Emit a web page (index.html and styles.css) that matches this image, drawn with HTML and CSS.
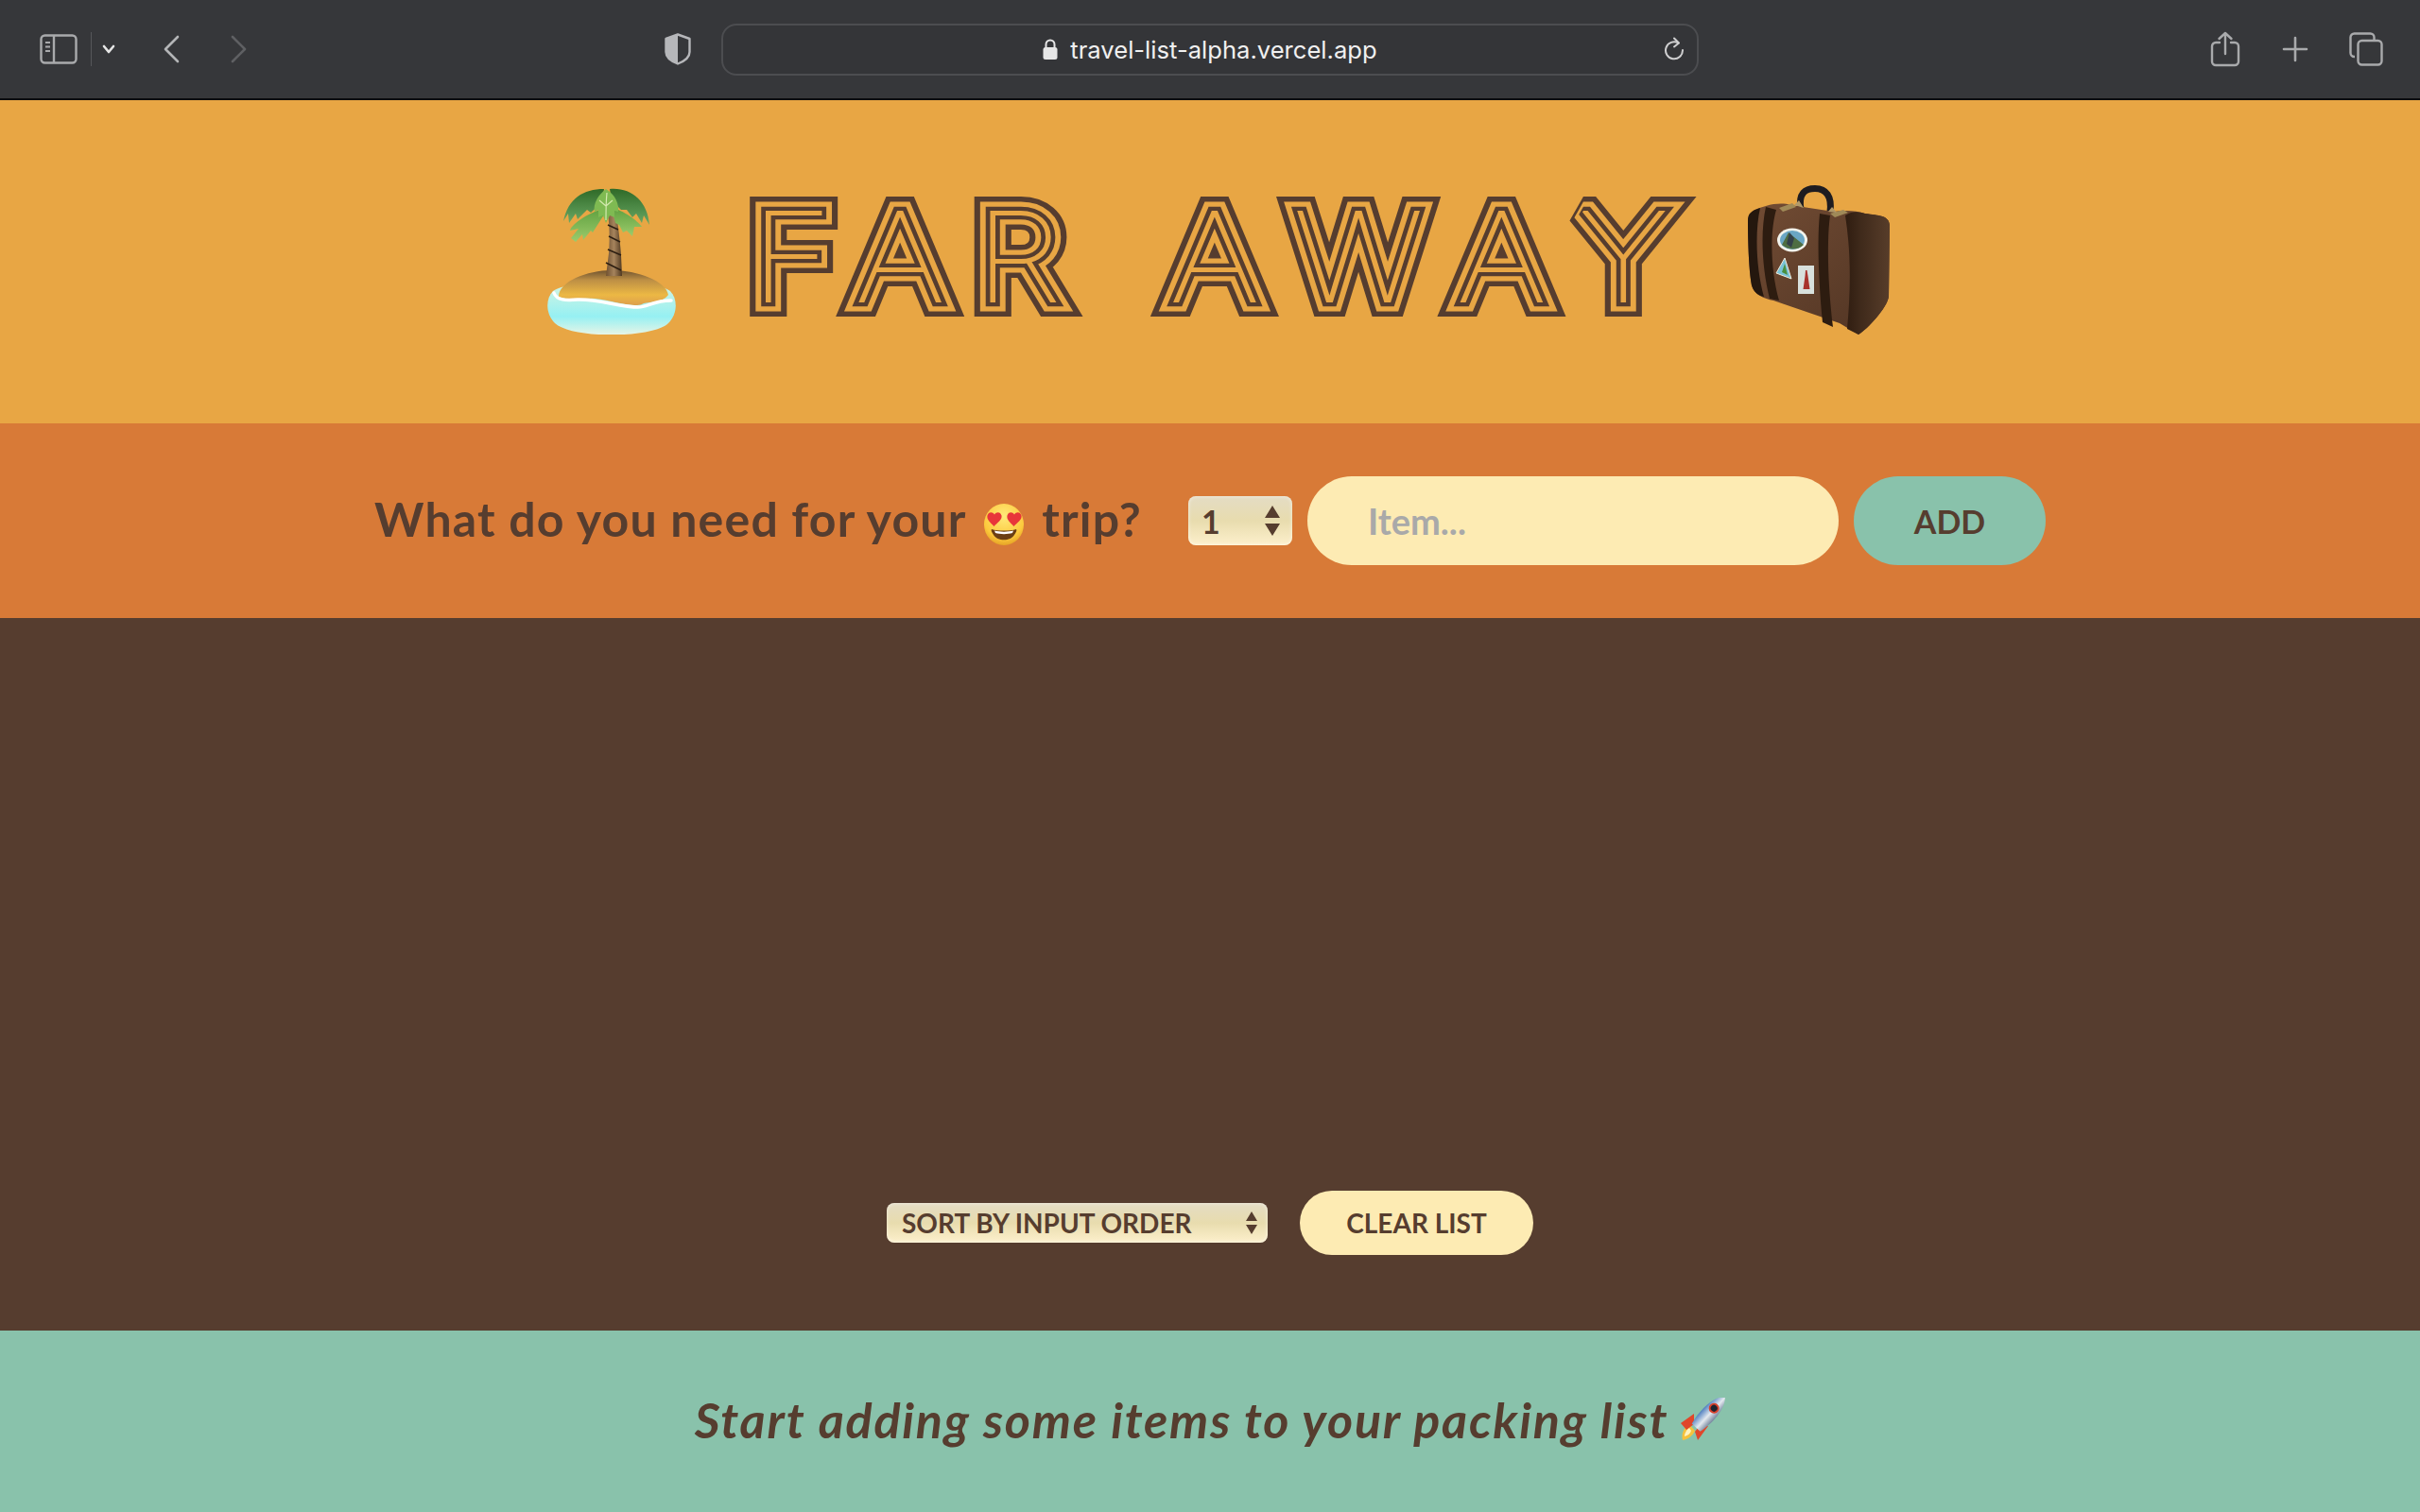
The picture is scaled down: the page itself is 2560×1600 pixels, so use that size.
FILE: index.html
```html
<!DOCTYPE html>
<html lang="en">
<head>
  <meta charset="UTF-8">
  <title>Far Away</title>
  <link rel="stylesheet" href="styles.css">
</head>
<body>
  <div class="toolbar">
    <svg class="tb-sidebar" width="40" height="32" viewBox="0 0 40 32" fill="none" stroke="#a9aaac" stroke-width="2.4">
      <rect x="1.5" y="1.5" width="37" height="29" rx="4"/>
      <path d="M15 1.5v29"/>
      <path d="M6 9h5M6 13.5h5M6 18h5" stroke-width="2"/>
    </svg>
    <span class="tb-sep"></span>
    <svg class="tb-drop" width="14" height="10" viewBox="0 0 14 10" fill="none" stroke="#e6e6e6" stroke-width="2.6" stroke-linecap="round" stroke-linejoin="round"><path d="M2 2l5 6 5-6"/></svg>
    <svg class="tb-back" width="18" height="30" viewBox="0 0 18 30" fill="none" stroke="#b4b5b7" stroke-width="2.6" stroke-linecap="round" stroke-linejoin="round"><path d="M16 2L3 15l13 13"/></svg>
    <svg class="tb-forward" width="18" height="30" viewBox="0 0 18 30" fill="none" stroke="#5f6063" stroke-width="2.6" stroke-linecap="round" stroke-linejoin="round"><path d="M2 2l13 13L2 28"/></svg>
    <svg class="tb-shield" width="28" height="34" viewBox="0 0 28 34">
      <path d="M14 1.500L26.500 6v14c0 6-6 10-12.500 12.500C7.500 30 1.500 26 1.500 20V6z" fill="none" stroke="#b6b7ba" stroke-width="2.4" stroke-linejoin="round"/>
      <path d="M14 1.500L1.500 6v14C1.500 26 7.500 30 14 32.500z" fill="#b6b7ba"/>
    </svg>
    <div class="urlbar">
      <svg class="url-lock" width="16" height="24" viewBox="0 0 16 24">
        <path d="M3.500 11V7a4.500 4.500 0 0 1 9 0v4" fill="none" stroke="#e6e6e6" stroke-width="2"/>
        <rect x="0.500" y="10" width="15" height="13" rx="2.500" fill="#e6e6e6"/>
      </svg>
      <span class="url-text">travel-list-alpha.vercel.app</span>
      <svg class="url-reload" width="22" height="26" viewBox="0 0 22 26" fill="none" stroke="#cfcfd0" stroke-width="2" stroke-linecap="round" stroke-linejoin="round">
        <path d="M15.500 6.500A9 9 0 1 0 20 14"/>
        <path d="M11 1.500l5 5-5 4"/>
      </svg>
    </div>
    <svg class="tb-share" width="32" height="38" viewBox="0 0 32 38" fill="none" stroke="#a9aaac" stroke-width="2.400" stroke-linecap="round" stroke-linejoin="round">
      <path d="M10 12H6a4 4 0 0 0-4 4v16a4 4 0 0 0 4 4h20a4 4 0 0 0 4-4V16a4 4 0 0 0-4-4h-4"/>
      <path d="M16 24V2M9.500 8L16 2l6.500 6"/>
    </svg>
    <svg class="tb-plus" width="28" height="28" viewBox="0 0 28 28" stroke="#a9aaac" stroke-width="2.600" stroke-linecap="round"><path d="M14 2v24M2 14h24"/></svg>
    <svg class="tb-tabs" width="36" height="36" viewBox="0 0 36 36" fill="none" stroke="#a9aaac" stroke-width="2.400">
      <path d="M6 26H5.500a4 4 0 0 1-4-4V5.500a4 4 0 0 1 4-4h17a4 4 0 0 1 4 4V9"/>
      <rect x="9.500" y="9" width="25" height="25.500" rx="4"/>
    </svg>
  </div>

  <header class="logo">
    <svg class="emoji-island" width="136" height="156" viewBox="0 0 136 156">
      <defs>
        <linearGradient id="water" x1="0" y1="0" x2="0" y2="1">
          <stop offset="0" stop-color="#d6f4e0"/><stop offset="0.65" stop-color="#96f0f3"/><stop offset="1" stop-color="#e8f5e6"/>
        </linearGradient>
        <linearGradient id="sand" x1="0" y1="0" x2="0" y2="1">
          <stop offset="0" stop-color="#6f5330"/><stop offset="0.28" stop-color="#bd8f45"/><stop offset="0.7" stop-color="#ecb844"/><stop offset="1" stop-color="#dd9f4e"/>
        </linearGradient>
        <linearGradient id="trunk" x1="0" y1="0" x2="1" y2="0">
          <stop offset="0" stop-color="#6f5030"/><stop offset="0.5" stop-color="#a5835c"/><stop offset="1" stop-color="#4f3820"/>
        </linearGradient>
        <linearGradient id="frond" x1="0" y1="0" x2="0" y2="1">
          <stop offset="0" stop-color="#5fa03f"/><stop offset="1" stop-color="#9ccb6c"/>
        </linearGradient>
        <linearGradient id="frondDark" x1="0" y1="0" x2="0" y2="1">
          <stop offset="0" stop-color="#2f6a28"/><stop offset="1" stop-color="#6aa864"/>
        </linearGradient>
      </defs>
      <path d="M6 110C20 98 116 98 130 110C138 118 138 134 128 144C112 160 26 161 8 144C-2 134-2 118 6 110Z" fill="url(#water)"/>
      <path d="M12 116C12 100 42 88 68 88C96 88 126 100 128 114C120 124 108 120 100 124C90 128 70 120 50 118C36 117 22 120 12 116Z" fill="url(#sand)"/>
      <path d="M7 112C10 120 20 120 32 119C52 118 78 127 96 127C106 127 112 120 131 120" fill="none" stroke="#fff" stroke-width="3.500" stroke-linecap="round"/>
      <path d="M64 28L73 27C75 42 77 58 78 72L79 94L62 94L65 70C66 55 66 42 64 28Z" fill="url(#trunk)"/>
      <path d="M64 40l11 5M65 52l12 6M64 66l14 6M62 80l16 8" stroke="#2d1f12" stroke-width="1.600" fill="none"/>
      <path d="M60 2C38 2 22 12 17 36L22 28L23 38L30 28L32 34L42 24L46 27L58 16Z" fill="url(#frondDark)"/>
      <path d="M66 2C88 0 106 14 108 40L102 30L100 38L94 28L90 32L84 24L78 24L68 14Z" fill="url(#frondDark)"/>
      <path d="M62 22C46 26 26 38 24 46L33 44L25 54L30 58L37 50L38 56L46 46L48 48L62 26Z" fill="url(#frond)"/>
      <path d="M68 22C80 24 96 36 100 42L92 42L90 52L84 46L80 48L76 40L72 38Z" fill="url(#frond)"/>
      <path d="M62 2C54 8 48 18 50 26L54 24L54 32L59 30L62 38L66 30L71 32L71 25L75 26C76 18 72 8 62 2Z" fill="#7fba52"/>
      <path d="M63 6C62 16 62 26 62 35M62 20l-7-6M62 20l7-6" stroke="#d5eab0" stroke-width="1.200" fill="none"/>
    </svg>
    <h1 class="title">
      <svg class="title-art" width="1000" height="134" viewBox="0 0 1000 134">
        <g transform="scale(1.12 1)">
          <use class="line line-outer" href="#farAway"/>
          <use class="line line-gap" href="#farAway"/>
          <use class="line line-inner" href="#farAway"/>
          <text id="farAway" class="title-text" x="4 103 216 320 400 517 671 786" y="115">FAR AWAY</text>
        </g>
      </svg>
    </h1>
    <svg class="emoji-case" width="152" height="158" viewBox="0 0 152 158">
      <defs>
        <linearGradient id="leather" x1="0" y1="0" x2="1" y2="1">
          <stop offset="0" stop-color="#724c34"/><stop offset="1" stop-color="#503423"/>
        </linearGradient>
        <linearGradient id="side" x1="0" y1="0" x2="1" y2="0">
          <stop offset="0" stop-color="#2f1c10"/><stop offset="0.35" stop-color="#3f2a1b"/><stop offset="1" stop-color="#583d2a"/>
        </linearGradient>
      </defs>
      <path d="M57 26C54 8 62 3.500 72 3.500C84 3.500 90 12 88 28" fill="none" stroke="#1e1c20" stroke-width="7"/>
      <path d="M1 38C1 29 8 25 20 22C30 19 40 19 46 21L92 28C104 26 116 27 125 30C140 32 150 32 151 42L150 118C148 130 128 152 118 158L98 146L28 122C18 120 8 116 5 106C2 90 1 60 1 38Z" fill="url(#leather)"/>
      <path d="M104 32C112 27 118 28 125 30C140 32 150 32 151 42L150 118C148 130 128 152 118 158L106 152C110 110 110 70 104 32Z" fill="url(#side)"/>
      <path d="M20 23L31 26C24 50 25 90 34 122L24 120C16 88 14 50 20 23Z" fill="#2d1c10"/>
      <path d="M77 30L88 32C84 60 86 110 91 150L80 145C76 105 74 60 77 30Z" fill="#2d1c10"/>
      <path d="M1 38C1 30 4 27 14 24C8 50 10 90 18 118C10 116 7 112 5 106C2 90 1 60 1 38Z" fill="#24170e"/>
      <path d="M34 24l14-5 4 4-14 5zM88 30l14-4 5 3-14 5z" fill="#a08a58"/>
      <path d="M50 21l5-5 5 8M86 28l4-5 5 6" fill="#b0996a"/>
      <ellipse cx="48" cy="58" rx="16" ry="12.500" fill="#f2f3ec"/>
      <ellipse cx="48" cy="58" rx="13" ry="10" fill="#6aa6c4"/>
      <path d="M37 63L44 50L50 55L60 63C54 69 44 69 37 63Z" fill="#4e6d42"/>
      <path d="M42 62L45 50L50 56L47 66Z" fill="#33404a"/>
      <path d="M40 77L47 99L31 93Z" fill="#7ac3d8" stroke="#f0ead8" stroke-width="1"/>
      <path d="M40 83L43 95L37 92Z" fill="#4a8f3f"/>
      <rect x="54" y="85" width="17" height="30" fill="#d8e0dc"/>
      <path d="M62 90h1.500l1 6 2 14h-7l2-14z" fill="#a8332c"/>
    </svg>
  </header>

  <form class="add-form">
    <h3 class="add-title">What do you need for your
      <svg class="emoji-love" width="42" height="44" viewBox="0 0 42 44">
        <defs>
          <radialGradient id="face" cx="0.5" cy="0.3" r="0.75">
            <stop offset="0" stop-color="#ffe97a"/><stop offset="0.7" stop-color="#fcc93c"/><stop offset="1" stop-color="#e09a20"/>
          </radialGradient>
        </defs>
        <ellipse cx="21" cy="22" rx="21" ry="22" fill="url(#face)"/>
        <path d="M10 33C8 30 7 28 8 27C14 29 28 29 34 27C35 28 34 30 32 33C28 40 14 40 10 33Z" fill="#6b3f14"/>
        <path d="M11 28.500C16 30 26 30 31 28.500L30 31C25 32.500 17 32.500 12 31Z" fill="#fff"/>
        <path d="M10.500 24C7 20 2.500 17 3.500 12.500C4.500 8.500 9 8 11 11.500C13 8 17.500 8.500 18.500 12.500C19.500 17 14 20 10.500 24Z" fill="#e8363a"/>
        <path d="M31.500 24C28 20 23.500 17 24.500 12.500C25.500 8.500 30 8 32 11.500C34 8 38.500 8.500 39.500 12.500C40.500 17 35 20 31.500 24Z" fill="#e8363a"/>
      </svg>
      trip?</h3>
    <div class="select-wrap">
      <select class="select select-qty"><option>1</option></select>
      <svg class="select-arrows select-arrows-lg" width="16" height="32" viewBox="0 0 16 32" fill="#563d2f"><path d="M8 0l8 13H0zM8 32l8-13H0z"/></svg>
    </div>
    <input class="item-input" type="text" placeholder="Item...">
    <button class="btn btn-add" type="button">ADD</button>
  </form>

  <main class="list">
    <div class="actions">
      <div class="select-wrap">
        <select class="select select-sort"><option>SORT BY INPUT ORDER</option></select>
        <svg class="select-arrows select-arrows-sm" width="12" height="24" viewBox="0 0 12 24" fill="#563d2f"><path d="M6 0l6 10H0zM6 24l6-10H0z"/></svg>
      </div>
      <button class="btn btn-clear" type="button">CLEAR LIST</button>
    </div>
  </main>

  <footer class="stats">
    <em>Start adding some items to your packing list</em>
    <svg class="emoji-rocket" width="47" height="46" viewBox="0 0 47 46">
      <defs>
        <linearGradient id="hull" x1="0" y1="0" x2="1" y2="0">
          <stop offset="0" stop-color="#4f7fc0"/><stop offset="0.55" stop-color="#e4e9ef"/><stop offset="1" stop-color="#76879f"/>
        </linearGradient>
      </defs>
      <path d="M2 45C0 38 4 31 9 28L15 35C13 40 8 44 2 45Z" fill="#f5c23c"/>
      <path d="M4 41C4 37 7 33 9 32L11 35C10 38 8 40 4 41Z" fill="#fff3c0"/>
      <path d="M0 27L14 17L14 28L6 34Z" fill="#e0462a"/>
      <path d="M29 30L18 45L15 36L21 28Z" fill="#e0462a"/>
      <g transform="rotate(43 27 20)">
        <path d="M27 -9C36 -1 37 20 33 36L21 36C17 20 18 -1 27 -9Z" fill="url(#hull)"/>
        <circle cx="27" cy="8" r="5.500" fill="#d8402c"/>
        <circle cx="27" cy="8" r="3.500" fill="#1c2230"/>
      </g>
    </svg>
  </footer>
</body>
</html>
```
FILE: styles.css
```css
* { box-sizing: border-box; margin: 0; padding: 0; }

body { height: 1600px; display: flex; flex-direction: column; font-family: Lato, "Open Sans", sans-serif; color: #563d2f; background: #563d2f; overflow: hidden; }

/* browser chrome */
.toolbar { height: 106px; flex: none; display: flex; align-items: center; padding-left: 42px; background: #36373a; border-bottom: 2px solid #0c0c0d; }
.tb-sep { width: 1px; height: 36px; margin-left: 14px; background: #55565a; }
.tb-drop { margin-left: 11px; }
.tb-back { margin-left: 50px; }
.tb-forward { margin-left: 54px; }
.tb-shield { margin-left: 441px; }
.urlbar { width: 1034px; height: 55px; margin-left: 32px; display: flex; align-items: center; justify-content: center; position: relative; background: #343538; border: 2px solid #4c4d50; border-radius: 16px; }
.url-lock { margin-right: 13px; }
.url-text { font-family: Inter, Roboto, sans-serif; font-size: 25.6px; color: #f0f0f0; }
.url-reload { position: absolute; right: 13px; top: 12px; }
.tb-share { margin-left: 541px; }
.tb-plus { margin-left: 44px; }
.tb-tabs { margin-left: 43px; }

/* logo */
.logo { height: 342px; flex: none; display: flex; align-items: center; justify-content: center; padding-left: 19px; background: #e8a644; }
.emoji-island { margin-right: 75px; margin-top: -3px; }
.emoji-case { margin-left: 58px; margin-top: -4px; }
.title { display: flex; margin-top: -12px; }
.title-art { --ln: #e8a644; --w: 2px; overflow: visible; }
.title-text { font-family: Inter, sans-serif; font-size: 131px; font-weight: 100; fill: #e8a644; stroke: var(--ln); stroke-width: var(--w); stroke-miterlimit: 2.2; }
.line-outer { --ln: #563d2f; --w: 32px; }
.line-gap { --ln: #e8a644; --w: 21px; }
.line-inner { --ln: #563d2f; --w: 10.5px; }

/* add form */
.add-form { height: 206px; flex: none; display: flex; align-items: center; justify-content: center; background: #d87a37; }
.add-title { font-size: 50px; font-weight: 700; letter-spacing: 1.2px; white-space: nowrap; margin: 0 49px 4px 0; }
.emoji-love { vertical-align: -9px; margin: 0 6px; }
.select-wrap { position: relative; display: flex; }
.select { appearance: none; border: none; font-family: Lato, sans-serif; font-weight: 700; color: #563d2f; background: linear-gradient(#e4dcc4, #e8dcae 50%, #fdf0cc); box-shadow: inset 0 0 4px rgba(255, 255, 255, 0.6); border-radius: 8px; }
.select-qty { width: 110px; height: 52px; margin-right: 16px; padding-left: 14px; font-size: 34px; }
.select-sort { width: 403px; height: 42px; padding-left: 16px; font-size: 28px; }
.select-arrows { position: absolute; pointer-events: none; }
.select-arrows-lg { left: 81px; top: 10px; }
.select-arrows-sm { right: 11px; top: 9px; }
.item-input { width: 562px; height: 94px; margin-right: 16px; padding-left: 64px; border: none; border-radius: 47px; font-family: Lato, sans-serif; font-size: 38px; font-weight: 700; color: #563d2f; background: #fdebb3; }
.item-input::placeholder { color: #a9a9a9; }
.btn { border: none; font-family: Lato, sans-serif; font-weight: 700; color: #563d2f; cursor: pointer; }
.btn-add { width: 203px; height: 94px; border-radius: 47px; font-size: 34px; background: #89c2ab; }

/* list */
.list { flex: 1; display: flex; flex-direction: column; justify-content: flex-end; padding-bottom: 80px; background: #563d2f; }
.actions { display: flex; align-items: center; justify-content: center; gap: 34px; }
.btn-clear { width: 247px; height: 68px; border-radius: 34px; font-size: 28px; background: #fdebb3; }

/* footer */
.stats { height: 192px; flex: none; display: flex; align-items: center; justify-content: center; gap: 13px; padding-bottom: 4px; background: #89c2ab; font-size: 52px; font-weight: 700; letter-spacing: 1.8px; }
```
